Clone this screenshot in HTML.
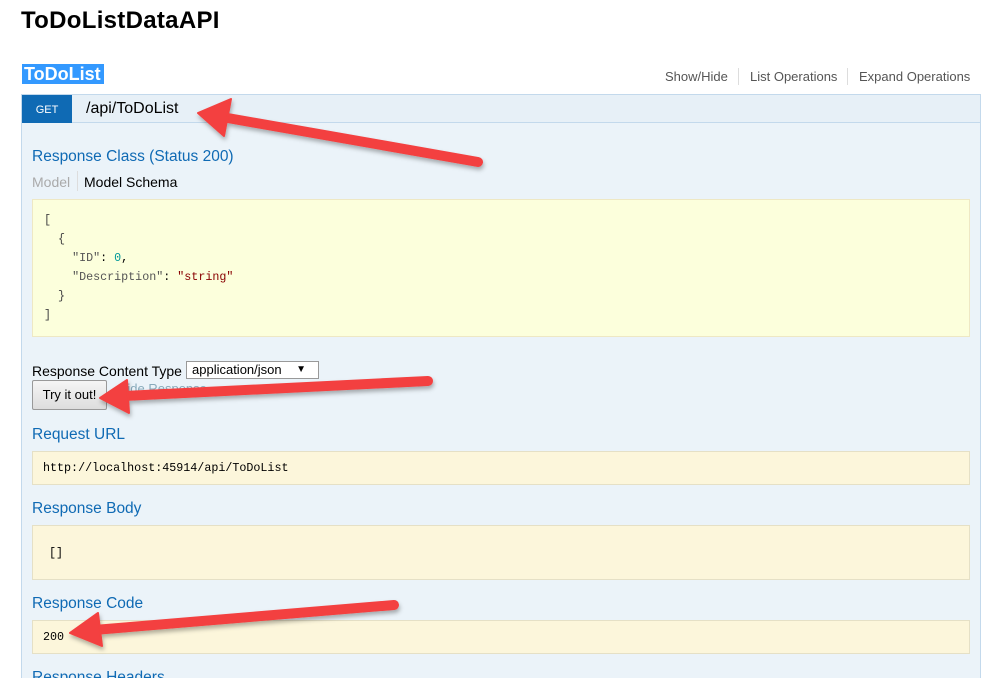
<!DOCTYPE html>
<html><head><meta charset="utf-8"><style>
*{margin:0;padding:0;box-sizing:border-box}
html,body{width:1008px;height:678px;overflow:hidden}
body{background:#fff;font-family:"Liberation Sans",sans-serif;color:#000}
#w{position:relative;width:1008px;height:678px;overflow:hidden}
.a{position:absolute;white-space:nowrap}
.h{color:#0f6ab4;font-size:15.5px}
.mono{font-family:"Liberation Mono",monospace;font-size:11.7px}
.box{position:absolute;left:32px;width:938px;background:#fcf6db;border:1px solid #e5e0c6}
</style></head><body><div id="w">
<div class="a" style="left:21px;top:7px;font-size:24px;font-weight:bold;letter-spacing:0.3px">ToDoListDataAPI</div>
<div class="a" style="left:22px;top:64px;height:20px;background:#3399ff;color:#fff;font-weight:bold;font-size:18px;padding:0 3px 0 2px;line-height:20px">ToDoList</div>
<div class="a" style="left:665px;top:69px;font-size:13px;color:#555">Show/Hide</div>
<div class="a" style="left:738px;top:68px;width:1px;height:17px;background:#ddd"></div>
<div class="a" style="left:750px;top:69px;font-size:13px;color:#555">List Operations</div>
<div class="a" style="left:847px;top:68px;width:1px;height:17px;background:#ddd"></div>
<div class="a" style="left:859px;top:69px;font-size:13px;color:#555">Expand Operations</div>
<div class="a" style="left:21px;top:94px;width:960px;height:584px;background:#ebf3f9;border:1px solid #c3d9ec;border-bottom:none"></div>
<div class="a" style="left:22px;top:95px;width:958px;height:28px;background:#e7f0f7;border-bottom:1px solid #c3d9ec"></div>
<div class="a" style="left:22px;top:95px;width:50px;height:28px;background:#0f6ab4;color:#fff;font-size:11px;text-align:center;line-height:30px">GET</div>
<div class="a" style="left:86px;top:100px;font-size:16px">/api/ToDoList</div>
<div class="a h" style="left:32px;top:148px">Response Class (Status 200)</div>
<div class="a" style="left:32px;top:174px;font-size:14px;color:#aaa">Model</div>
<div class="a" style="left:77px;top:171px;width:1px;height:20px;background:#ddd"></div>
<div class="a" style="left:84px;top:174px;font-size:14px">Model Schema</div>
<div class="box" style="top:199px;height:138px;background:#fcffdc;border-color:#eee8c4"></div>
<div class="a mono" style="left:44px;top:211px;line-height:19px;color:#000;white-space:pre"><span style="color:#444">[</span>
  <span style="color:#444">{</span>
    <span style="color:#555">"ID"</span>: <span style="color:#099">0</span>,
    <span style="color:#555">"Description"</span>: <span style="color:#800">"string"</span>
  <span style="color:#444">}</span>
<span style="color:#444">]</span></div>
<div class="a" style="left:32px;top:363px;font-size:14px">Response Content Type</div>
<div class="a" style="left:186px;top:361px;width:133px;height:18px;border:1px solid #999;background:#fff;font-size:13px;padding-left:5px;line-height:16px">application/json<span style="position:absolute;right:12px;font-size:10px">▼</span></div>
<div class="a" style="left:32px;top:380px;width:75px;height:30px;border:1px solid #999;border-radius:2px;background:linear-gradient(#f5f5f5,#ddd);font-size:13px;text-align:center;line-height:28px">Try it out!</div>
<div class="a" style="left:118px;top:381px;font-size:13px;color:#8ab">Hide Response</div>
<div class="a h" style="left:32px;top:426px">Request URL</div>
<div class="box" style="top:451px;height:34px"></div>
<div class="a mono" style="left:43px;top:461px">http://localhost:45914/api/ToDoList</div>
<div class="a h" style="left:32px;top:500px">Response Body</div>
<div class="box" style="top:525px;height:55px"></div>
<div class="a mono" style="left:49px;top:546px">[]</div>
<div class="a h" style="left:32px;top:595px">Response Code</div>
<div class="box" style="top:620px;height:34px"></div>
<div class="a mono" style="left:43px;top:630px">200</div>
<div class="a h" style="left:32px;top:669px;height:9px;overflow:hidden">Response Headers</div>
<svg class="a" style="left:0;top:0" width="1008" height="678">
<defs>
<filter id="s" x="-10%" y="-50%" width="120%" height="200%"><feDropShadow dx="1" dy="3" stdDeviation="2" flood-color="#000" flood-opacity="0.3"/></filter>
</defs>
<g fill="#f3403f" stroke="#f3403f" stroke-linecap="round" filter="url(#s)">
<line x1="478" y1="162" x2="222" y2="117" stroke-width="10"/>
<polygon points="198,113 231,99 224,136" stroke-width="2" stroke-linejoin="round"/>
<line x1="428" y1="381" x2="124" y2="396" stroke-width="10"/>
<polygon points="100,398 127,380 129,413" stroke-width="2" stroke-linejoin="round"/>
<line x1="394" y1="605" x2="94" y2="630" stroke-width="10"/>
<polygon points="70,633 98,613 102,646" stroke-width="2" stroke-linejoin="round"/>
</g>
</svg>
</div></body></html>
